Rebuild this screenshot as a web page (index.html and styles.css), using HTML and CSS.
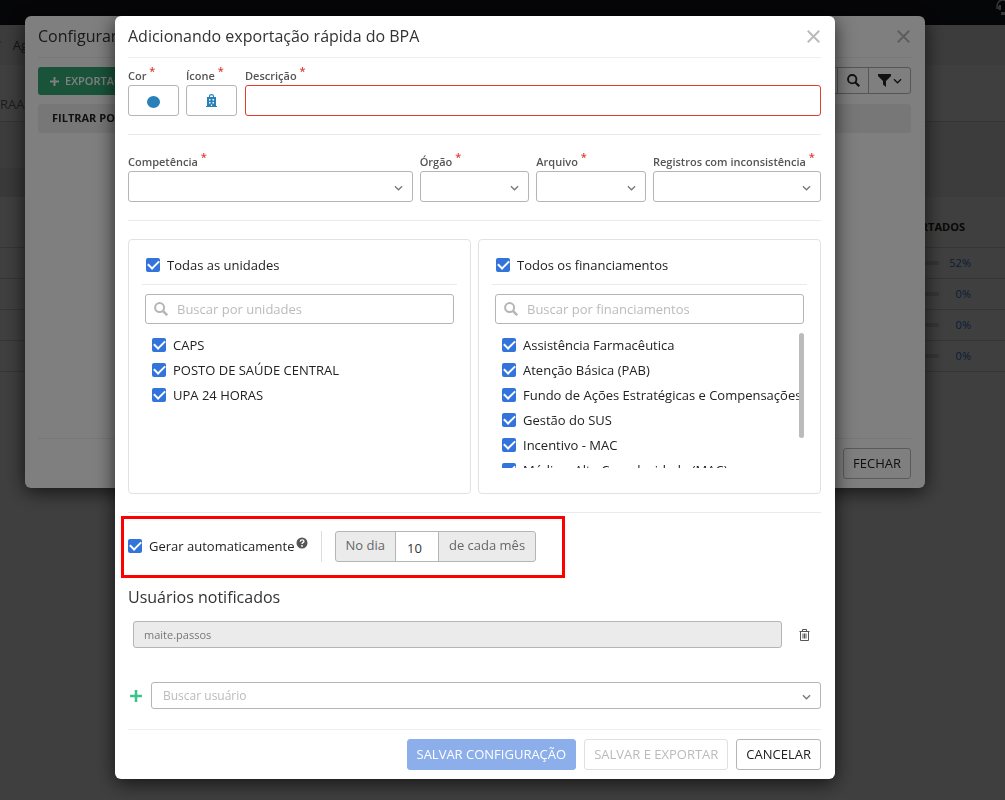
FILE: index.html
```html
<!DOCTYPE html>
<html lang="pt-BR">
<head>
<meta charset="utf-8">
<title>Exportação rápida do BPA</title>
<link rel="stylesheet" href="styles.css">
</head>
<body>
<svg class="defs" aria-hidden="true">
  <symbol id="chevron" viewBox="0 0 10 6"><path d="M1 1l4 4 4-4" fill="none" stroke="currentColor" stroke-width="1.4"/></symbol>
  <symbol id="close" viewBox="0 0 12 12"><path d="M.7.7l10.600 10.600M11.300.7L.7 11.300" fill="none" stroke="currentColor" stroke-width="1.8"/></symbol>
  <symbol id="search" viewBox="0 0 14 14"><circle cx="5.6" cy="5.6" r="4.5" fill="none" stroke="currentColor" stroke-width="2"/><path d="M8.800 8.800l4.400 4.400" fill="none" stroke="currentColor" stroke-width="2.4"/></symbol>
  <symbol id="plus" viewBox="0 0 12 12"><path d="M6 0v12M0 6h12" fill="none" stroke="currentColor" stroke-width="2.6"/></symbol>
</svg>

<div class="page">
  <header class="topbar">
    <svg class="headset" viewBox="0 0 16 16"><path d="M2 9V6a6 6 0 0 1 12 0v6q0 2-3 2H8" fill="none" stroke="currentColor" stroke-width="1.5"/><path d="M4 5h2v5H4q-2-2 0-5zM10 5h2v5h-2z" fill="currentColor"/><rect x="6" y="12" width="5" height="3" fill="currentColor"/></svg>
  </header>
  <nav class="crumbs"><span>/</span><span>Agenda</span></nav>
  <div class="tabs">RAAS</div>
  <div class="filters"><div class="filters-bar"></div></div>
  <table class="exports">
    <thead><tr><th>EXPORTADOS</th></tr></thead>
    <tbody>
      <tr><td><div class="progress"><i></i><a href="#">52%</a></div></td></tr>
      <tr><td><div class="progress"><i></i><a href="#">0%</a></div></td></tr>
      <tr><td><div class="progress"><i></i><a href="#">0%</a></div></td></tr>
      <tr><td><div class="progress"><i></i><a href="#">0%</a></div></td></tr>
    </tbody>
  </table>
</div>

<div class="overlay">
  <section class="modal modal-wide">
    <header class="modal-head">
      <h2>Configurar</h2>
      <button class="close" aria-label="Fechar janela"><svg><use href="#close"/></svg></button>
    </header>
    <div class="toolbar">
      <button class="btn-new"><svg><use href="#plus"/></svg>EXPORTAÇÃO</button>
      <div class="search-group">
        <input type="text" aria-label="Pesquisar">
        <button class="search-btn" aria-label="Buscar"><svg><use href="#search"/></svg></button>
        <button class="filter-btn" aria-label="Filtros">
          <svg class="funnel" viewBox="0 0 13 13"><path d="M0 0h13v2L8 7v6L5 10.500V7L0 2z" fill="currentColor"/></svg>
          <svg class="chev"><use href="#chevron"/></svg>
        </button>
      </div>
    </div>
    <div class="filter-title">FILTRAR POR</div>
    <footer class="modal-foot"><button class="btn">FECHAR</button></footer>
  </section>
</div>

<div class="overlay">
  <section class="modal" role="dialog" aria-labelledby="dialog-title">
    <header class="modal-head">
      <h2 id="dialog-title">Adicionando exportação rápida do BPA</h2>
      <button class="close" aria-label="Fechar"><svg><use href="#close"/></svg></button>
    </header>

    <div class="row identity">
      <div class="field">
        <label for="cor">Cor <sup>*</sup></label>
        <button id="cor" class="picker"><span class="dot"></span></button>
      </div>
      <div class="field">
        <label for="icone">Ícone <sup>*</sup></label>
        <button id="icone" class="picker"><svg class="building" viewBox="0 0 11 13"><path d="M3.500 3V2q0-1.400 2-1.400t2 1.400v1" fill="none" stroke="currentColor" stroke-width="1.200"/><path fill-rule="evenodd" fill="currentColor" d="M1 3h9v9h1v1H0v-1h1zM3 5v1.500h1.500V5zM6.500 5v1.500H8V5zM3 8v1.500h1.500V8zM6.500 8v1.500H8V8zM4.900 10.500V12h1.200v-1.500z"/></svg></button>
      </div>
      <div class="field">
        <label for="descricao">Descrição <sup>*</sup></label>
        <input id="descricao" class="control invalid" type="text">
      </div>
    </div>

    <div class="row selects">
      <div class="field span5">
        <label for="competencia">Competência <sup>*</sup></label>
        <div class="select"><select id="competencia" class="control"><option></option></select><svg><use href="#chevron"/></svg></div>
      </div>
      <div class="field span2">
        <label for="orgao">Órgão <sup>*</sup></label>
        <div class="select"><select id="orgao" class="control"><option></option></select><svg><use href="#chevron"/></svg></div>
      </div>
      <div class="field span2">
        <label for="arquivo">Arquivo <sup>*</sup></label>
        <div class="select"><select id="arquivo" class="control"><option></option></select><svg><use href="#chevron"/></svg></div>
      </div>
      <div class="field span3">
        <label for="registros">Registros com inconsistência <sup>*</sup></label>
        <div class="select"><select id="registros" class="control"><option></option></select><svg><use href="#chevron"/></svg></div>
      </div>
    </div>

    <div class="row cards">
      <section class="card">
        <label class="check all"><input type="checkbox" checked>Todas as unidades</label>
        <div class="search"><svg><use href="#search"/></svg><input type="text" class="control" placeholder="Buscar por unidades" aria-label="Buscar por unidades"></div>
        <div class="list">
          <label class="check"><input type="checkbox" checked>CAPS</label>
          <label class="check"><input type="checkbox" checked>POSTO DE SAÚDE CENTRAL</label>
          <label class="check"><input type="checkbox" checked>UPA 24 HORAS</label>
        </div>
      </section>
      <section class="card">
        <label class="check all"><input type="checkbox" checked>Todos os financiamentos</label>
        <div class="search"><svg><use href="#search"/></svg><input type="text" class="control" placeholder="Buscar por financiamentos" aria-label="Buscar por financiamentos"></div>
        <div class="scroller">
          <div class="list">
            <label class="check"><input type="checkbox" checked>Assistência Farmacêutica</label>
            <label class="check"><input type="checkbox" checked>Atenção Básica (PAB)</label>
            <label class="check"><input type="checkbox" checked>Fundo de Ações Estratégicas e Compensações (FAEC)</label>
            <label class="check"><input type="checkbox" checked>Gestão do SUS</label>
            <label class="check"><input type="checkbox" checked>Incentivo - MAC</label>
            <label class="check"><input type="checkbox" checked>Média e Alta Complexidade (MAC)</label>
          </div>
          <span class="thumb"></span>
        </div>
      </section>
    </div>

    <div class="auto">
      <label class="check"><input type="checkbox" checked>Gerar automaticamente</label>
      <svg class="help" viewBox="0 0 12 12"><circle cx="6" cy="6" r="5.500" fill="#555"/><path d="M4.200 4.600q.2-1.700 1.900-1.700 1.800 0 1.800 1.400 0 .9-1 1.400-.8.400-.8 1.300" fill="none" stroke="#fff" stroke-width="1.400"/><circle cx="6" cy="8.900" r=".9" fill="#fff"/></svg>
      <div class="day">
        <span>No dia</span><input type="text" value="10" aria-label="Dia do mês"><span>de cada mês</span>
      </div>
      <div class="highlight"></div>
    </div>

    <h3>Usuários notificados</h3>
    <div class="user">
      <input class="control" type="text" value="maite.passos" disabled aria-label="Usuário">
      <button class="icon-btn" aria-label="Remover"><svg class="trash" viewBox="0 0 10 12"><path d="M0 2.500h10M3 2.500V.5h4v2M1 2.500v9h8v-9M3.500 4.500v5M5 4.500v5M6.500 4.500v5" fill="none" stroke="currentColor"/></svg></button>
    </div>
    <div class="add-user">
      <svg><use href="#plus"/></svg>
      <div class="select"><select class="control" aria-label="Buscar usuário"><option>Buscar usuário</option></select><svg><use href="#chevron"/></svg></div>
    </div>

    <footer class="modal-foot">
      <button class="btn primary" disabled>SALVAR CONFIGURAÇÃO</button>
      <button class="btn" disabled>SALVAR E EXPORTAR</button>
      <button class="btn">CANCELAR</button>
    </footer>
  </section>
</div>
</body>
</html>
```

FILE: styles.css
```css
* { box-sizing: border-box; }
body { margin: 0; font: 13px/20px "Open Sans", "Noto Sans", sans-serif; color: #222; background: #fff; overflow: hidden; }
button, input, select { font: inherit; color: inherit; margin: 0; }
button { cursor: pointer; }
h2, h3 { margin: 0; font-size: 16px; line-height: 24px; font-weight: 400; color: #333; }
svg { display: block; }
.defs { display: none; }

/* Page behind the dialogs */
.page { min-height: 100vh; }
.topbar { height: 25px; background: #17181f; display: flex; justify-content: flex-end; overflow: hidden; }
.headset { width: 16px; height: 16px; color: #ddd; margin-right: -6px; flex: none; }
.crumbs { height: 40px; background: #f0f0f0; color: #555; display: flex; align-items: center; gap: 12px; }
.crumbs span:first-child { margin-left: -4px; }
.tabs { height: 57px; padding-top: 29px; border-bottom: 1px solid #d0d0d0; color: #777; }
.filters { height: 75px; background: #f2f2f2; display: flex; align-items: flex-end; }
.filters-bar { width: 120px; height: 29px; background: #e4e4e4; }
.exports { width: 100%; border-collapse: collapse; font-size: 11px; }
.exports th { height: 50px; padding: 10px 40px 0 0; text-align: right; font-weight: 700; border-bottom: 1px solid #d4d4d4; }
.exports td { height: 31px; padding: 0 34px 0 0; border-bottom: 1px solid #d4d4d4; }
.progress { display: flex; justify-content: flex-end; align-items: center; }
.progress i { width: 60px; height: 4px; background: #d8d8d8; }
.progress a { width: 32px; text-align: right; color: #3273dc; text-decoration: none; }

/* Dialogs */
.overlay { position: fixed; inset: 0; padding: 16px 80px 16px 25px; background: rgba(0, 0, 0, .5); display: flex; justify-content: center; align-items: flex-start; }
.modal { width: 100%; max-width: 720px; padding: 0 14px 9px 13px; background: #fff; border-radius: 6px; box-shadow: 0 4px 20px rgba(0, 0, 0, .7); }
.modal-wide { max-width: 900px; }
.modal-head { height: 42px; display: flex; align-items: center; justify-content: space-between; border-bottom: 1px solid #eee; }
.modal-head h2 { padding-bottom: 2px; }
.close { border: 0; background: none; padding: 0; color: #bbb; }
.close svg { width: 13px; height: 13px; margin-right: 1px; }
.modal-foot { padding-top: 9px; border-top: 1px solid #eee; display: flex; justify-content: flex-end; gap: 8px; }
.btn { height: 31px; padding: 0 9px 2px; border: 1px solid #b5b5b5; border-radius: 3px; background: #fff; color: #222; }
.btn:disabled { border-color: #e0e0e0; color: #bbb; }
.btn.primary { background: #8caeea; border-color: #8caeea; color: #fff; }

.toolbar { padding: 9px 0; display: flex; justify-content: space-between; }
.btn-new { height: 28px; padding: 0 12px; border: 0; border-radius: 3px; background: #33a675; color: #fff; font-size: 11px; font-weight: 600; display: flex; align-items: center; gap: 6px; }
.btn-new svg { width: 9px; height: 9px; }
.search-group { display: flex; height: 27px; border: 1px solid #aaa; border-radius: 3px; }
.search-group input { width: 160px; border: 0; background: none; }
.search-group button { border: 0; border-left: 1px solid #aaa; background: none; padding: 0 8px 0 9px; display: flex; align-items: center; gap: 2px; }
.search-group svg { width: 13px; height: 13px; }
.search-group .chev { width: 9px; height: 6px; }
.filter-title { height: 29px; margin-bottom: 305px; padding: 0 14px; background: #eee; border-radius: 3px; font-size: 11px; line-height: 28px; font-weight: 700; }

/* Form rows */
.row { display: grid; gap: 7px; border-bottom: 1px solid #eaeaea; padding-bottom: 18px; }
.identity { grid-template-columns: 51px 52px minmax(0, 1fr); padding-top: 10px; }
.selects { grid-template-columns: repeat(12, minmax(0, 1fr)); padding-top: 19px; }
.cards { grid-template-columns: repeat(2, minmax(0, 1fr)); padding-top: 18px; }
.span5 { grid-column: span 5; }
.span3 { grid-column: span 3; }
.span2 { grid-column: span 2; }
.field label { display: block; height: 17px; font-size: 11px; line-height: 15px; font-weight: 600; color: #555; white-space: nowrap; }
sup { font-size: 11px; line-height: 0; color: #e03c31; }
.control { display: block; width: 100%; height: 31px; padding: 0 10px; border: 1px solid #b5b5b5; border-radius: 3px; background: #fff; outline: 0; }
.control::placeholder { color: #bbb; }
.invalid { border-color: #e03c31; }
.picker { width: 51px; height: 31px; padding: 0; border: 1px solid #b5b5b5; border-radius: 3px; background: #fff; color: #2980b9; display: flex; align-items: center; justify-content: center; }
.dot { width: 13px; height: 12px; margin-top: 2px; border-radius: 50%; background: currentColor; }
.building { width: 11px; height: 13px; }
.select { position: relative; flex: 1; }
.select select { appearance: none; }
.select svg { position: absolute; right: 10px; top: 50%; width: 9px; height: 6px; margin-top: -2px; color: #777; pointer-events: none; }

.check { display: flex; align-items: center; gap: 7px; height: 25px; padding-bottom: 2px; white-space: nowrap; }
.check input { appearance: none; flex: none; width: 14px; height: 14px; border-radius: 2px; background: #3273dc; display: flex; justify-content: center; }
.check input:checked::after { content: ""; width: 5px; height: 9px; border: solid #fff; border-width: 0 2px 2px 0; transform: rotate(45deg); }
.card { height: 255px; padding: 13px 13px 24px; border: 1px solid #e2e2e2; border-radius: 4px; }
.card .all { height: 32px; padding: 0 4px 8px; border-bottom: 1px solid #eaeaea; }
.search { position: relative; margin: 9px 3px; }
.search .control { height: 30px; padding-left: 31px; }
.search svg { position: absolute; left: 9px; top: 8px; width: 14px; height: 14px; color: #b5b5b5; }
.list { padding-left: 10px; }
.scroller { position: relative; margin-right: 3px; }
.scroller .list { height: 135px; margin-right: 5px; overflow: hidden; }
.thumb { position: absolute; right: 0; top: 0; width: 5px; height: 105px; border-radius: 3px; background: #bbb; }

.auto { position: relative; display: flex; align-items: center; padding: 18px 0; }
.help { width: 12px; height: 12px; margin: -8px 14px 0 1px; }
.day { display: flex; height: 31px; margin-left: 13px; border: 1px solid #b5b5b5; border-radius: 3px; background: #ebebeb; color: #666; position: relative; }
.day::before { content: ""; position: absolute; left: -15px; top: -1px; height: 31px; border-left: 1px solid #ddd; }
.day span { padding: 0 10px; line-height: 27px; }
.day input { width: 44px; border: solid #b5b5b5; border-width: 0 1px; padding: 2px 11px 0; background: #fff; color: #333; outline: 0; }
.highlight { position: absolute; left: -7px; top: 3px; width: 444px; height: 62px; border: 3px solid #f00; pointer-events: none; }
h3 { margin-top: 5px; }
.user { display: flex; align-items: center; margin-top: 12px; padding-left: 5px; }
.user .control { flex: 1; height: 27px; font-size: 11px; background: #ebebeb; color: #777; }
.icon-btn { width: 39px; padding: 0 17px; border: 0; background: none; color: #555; }
.trash { width: 11px; height: 12px; }
.add-user { display: flex; align-items: center; gap: 3px; margin: 34px 0 20px; }
.add-user > svg { width: 12px; height: 12px; margin-left: 2px; margin-right: 6px; color: #3cc48d; }
.add-user .control { height: 27px; padding: 1px 11px 0; color: #bbb; font-size: 12px; }
```
